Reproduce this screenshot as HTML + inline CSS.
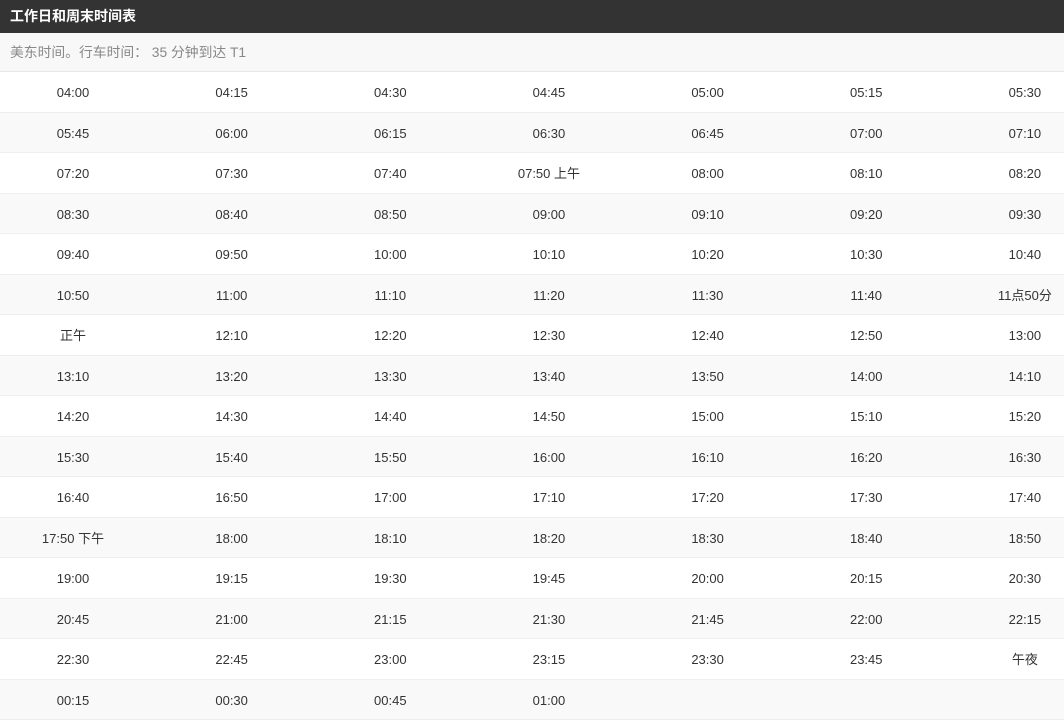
<!DOCTYPE html>
<html><head><meta charset="utf-8"><style>
body{margin:0;width:1064px;height:712px;overflow:hidden;background:#fff;font-family:"Liberation Sans","Noto Sans CJK SC",sans-serif;}
.h{height:33px;background:#333;color:#fff;font-size:14px;font-weight:bold;line-height:33px;padding-left:10px;}
.s{height:38px;background:#f8f8f8;color:#888;font-size:13.8px;line-height:39px;padding-left:10px;border-bottom:1px solid #e8e8e8;}
.r{height:40.5px;position:relative;border-bottom:1px solid #eee;box-sizing:border-box;}
.r:nth-child(even){background:#f9f9f9;}
.r span{position:absolute;top:1px;line-height:40px;width:158px;margin-left:-79px;text-align:center;font-size:13px;color:#333;}
</style></head><body>
<div class="h">工作日和周末时间表</div>
<div class="s">美东时间。行车时间： 35 分钟到达 T1</div>
<div id="t"></div>
<script>
const d=[["04:00","04:15","04:30","04:45","05:00","05:15","05:30"],
["05:45","06:00","06:15","06:30","06:45","07:00","07:10"],
["07:20","07:30","07:40","07:50 上午","08:00","08:10","08:20"],
["08:30","08:40","08:50","09:00","09:10","09:20","09:30"],
["09:40","09:50","10:00","10:10","10:20","10:30","10:40"],
["10:50","11:00","11:10","11:20","11:30","11:40","11点50分"],
["正午","12:10","12:20","12:30","12:40","12:50","13:00"],
["13:10","13:20","13:30","13:40","13:50","14:00","14:10"],
["14:20","14:30","14:40","14:50","15:00","15:10","15:20"],
["15:30","15:40","15:50","16:00","16:10","16:20","16:30"],
["16:40","16:50","17:00","17:10","17:20","17:30","17:40"],
["17:50 下午","18:00","18:10","18:20","18:30","18:40","18:50"],
["19:00","19:15","19:30","19:45","20:00","20:15","20:30"],
["20:45","21:00","21:15","21:30","21:45","22:00","22:15"],
["22:30","22:45","23:00","23:15","23:30","23:45","午夜"],
["00:15","00:30","00:45","01:00"]];
let h="";
for(const r of d){h+='<div class="r">';r.forEach((c,i)=>{h+='<span style="left:'+(73+158.65*i)+'px">'+c+'</span>'});h+='</div>';}
document.getElementById('t').innerHTML=h;
</script>
</body></html>
